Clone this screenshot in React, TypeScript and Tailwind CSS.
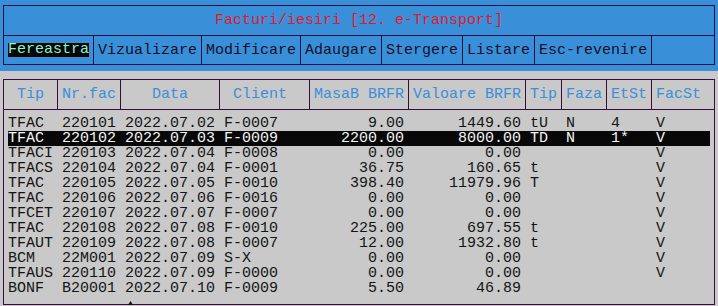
import React from "react";

type Row = {
  tip: string;
  nr: string;
  data: string;
  client: string;
  masa: string;
  val: string;
  t: string;
  faza: string;
  etst: string;
  facst: string;
  sel?: boolean;
};

const rows: Row[] = [
  { tip: "TFAC", nr: "220101", data: "2022.07.02", client: "F-0007", masa: "9.00", val: "1449.60", t: "tU", faza: "N", etst: "4", facst: "V" },
  { tip: "TFAC", nr: "220102", data: "2022.07.03", client: "F-0009", masa: "2200.00", val: "8000.00", t: "TD", faza: "N", etst: "1*", facst: "V", sel: true },
  { tip: "TFACI", nr: "220103", data: "2022.07.04", client: "F-0008", masa: "0.00", val: "0.00", t: "", faza: "", etst: "", facst: "V" },
  { tip: "TFACS", nr: "220104", data: "2022.07.04", client: "F-0001", masa: "36.75", val: "160.65", t: "t", faza: "", etst: "", facst: "V" },
  { tip: "TFAC", nr: "220105", data: "2022.07.05", client: "F-0010", masa: "398.40", val: "11979.96", t: "T", faza: "", etst: "", facst: "V" },
  { tip: "TFAC", nr: "220106", data: "2022.07.06", client: "F-0016", masa: "0.00", val: "0.00", t: "", faza: "", etst: "", facst: "V" },
  { tip: "TFCET", nr: "220107", data: "2022.07.07", client: "F-0007", masa: "0.00", val: "0.00", t: "", faza: "", etst: "", facst: "V" },
  { tip: "TFAC", nr: "220108", data: "2022.07.08", client: "F-0010", masa: "225.00", val: "697.55", t: "t", faza: "", etst: "", facst: "V" },
  { tip: "TFAUT", nr: "220109", data: "2022.07.08", client: "F-0007", masa: "12.00", val: "1932.80", t: "t", faza: "", etst: "", facst: "V" },
  { tip: "BCM", nr: "22M001", data: "2022.07.09", client: "S-X", masa: "0.00", val: "0.00", t: "", faza: "", etst: "", facst: "V" },
  { tip: "TFAUS", nr: "220110", data: "2022.07.09", client: "F-0000", masa: "0.00", val: "0.00", t: "", faza: "", etst: "", facst: "V" },
  { tip: "BONF", nr: "B20001", data: "2022.07.10", client: "F-0009", masa: "5.50", val: "46.89", t: "", faza: "", etst: "", facst: "" },
];

function line(r: Row): string {
  const a = Array.from({ length: 78 }, () => " ");
  const put = (s: string, at: number) => {
    for (let i = 0; i < s.length; i++) a[at + i] = s[i];
  };
  put(r.tip, 0);
  put(r.nr, 6);
  put(r.data, 13);
  put(r.client, 24);
  put(r.masa, 44 - r.masa.length);
  put(r.val, 57 - r.val.length);
  put(r.t, 58);
  put(r.faza, 62);
  put(r.etst, 67);
  put(r.facst, 72);
  return a.join("");
}

const headers = [
  { cls: "w-[45px]", label: " Tip " },
  { cls: "w-[54px]", label: "Nr.fac" },
  { cls: "w-[90px]", label: "   Data   " },
  { cls: "w-[81px]", label: " Client  " },
  { cls: "w-[90px]", label: "MasaB BRFR" },
  { cls: "w-[108px]", label: "Valoare BRFR" },
  { cls: "w-[27px]", label: "Tip" },
  { cls: "w-[36px]", label: "Faza" },
  { cls: "w-[36px]", label: "EtSt" },
  { cls: "w-[54px]", label: "FacSt " },
];

const menu = ["Vizualizare", "Modificare", "Adaugare", "Stergere", "Listare", "Esc-revenire"];

function MenuSep() {
  return (
    <div className="w-[9px] shrink-0 self-stretch flex">
      <div className="ml-[4px] w-px bg-[#121244]" />
    </div>
  );
}

function TableSep() {
  return (
    <div className="w-[9px] shrink-0 self-stretch flex">
      <div className="ml-[4px] w-px bg-[#3a0c3e]" />
    </div>
  );
}

export default function App() {
  return (
    <div
      className="relative w-[718px] h-[306px] overflow-hidden bg-[#c9c9c9] text-[15px] leading-[15px]"
      style={{ fontFamily: '"Liberation Mono", "DejaVu Sans Mono", monospace' }}
    >
      {/* top blue area */}
      <div className="bg-[#3a8fd9] pt-[5px] pb-[6px]">
        <div className="ml-[3px] w-[712px] border border-[#121244]">
          <div className="h-[29px] flex items-center justify-center text-[#e4182c] whitespace-pre">
            Facturi/iesiri [12. e-Transport]
          </div>
          <div className="h-[29px] border-t border-[#121244] flex items-stretch pl-[4px] text-[#10102a] whitespace-pre">
            <div className="flex items-center">
              <span className="inline-block h-[14px] leading-[14px] bg-[#050505] text-[#8cf2cf]">Fereastra</span>
            </div>
            {menu.map((m) => (
              <React.Fragment key={m}>
                <MenuSep />
                <div className="flex items-center">{m}</div>
              </React.Fragment>
            ))}
            <MenuSep />
          </div>
        </div>
      </div>

      {/* table */}
      <div className="pt-[8px]">
        <div className="ml-[3px] w-[712px] h-[225px] border-l border-r border-t border-[#3a0c3e]">
          <div className="h-[30px] border-b border-[#3a0c3e] flex items-stretch px-[4px] text-[#3a8fd9] whitespace-pre">
            {headers.map((h, i) => (
              <React.Fragment key={i}>
                {i > 0 && <TableSep />}
                <div className={`${h.cls} shrink-0 flex items-center`}>{h.label}</div>
              </React.Fragment>
            ))}
          </div>
          <div className="pt-[6px] px-[4px]">
            {rows.map((r, i) => (
              <div
                key={i}
                className={
                  r.sel
                    ? "h-[15px] pt-[1px] leading-[14px] whitespace-pre bg-[#080808] text-[#f4f4f4]"
                    : "h-[15px] pt-[1px] leading-[14px] whitespace-pre text-[#141414]"
                }
              >
                {line(r)}
              </div>
            ))}
          </div>
        </div>
        <div className="ml-[3px] w-[712px] h-px bg-[#3a0c3e]" />
      </div>

      <svg className="absolute left-[128px] top-[301px]" width="5" height="4" viewBox="0 0 5 4">
        <polygon points="2.5,0 5,4 0,4" fill="#101010" />
      </svg>
    </div>
  );
}
